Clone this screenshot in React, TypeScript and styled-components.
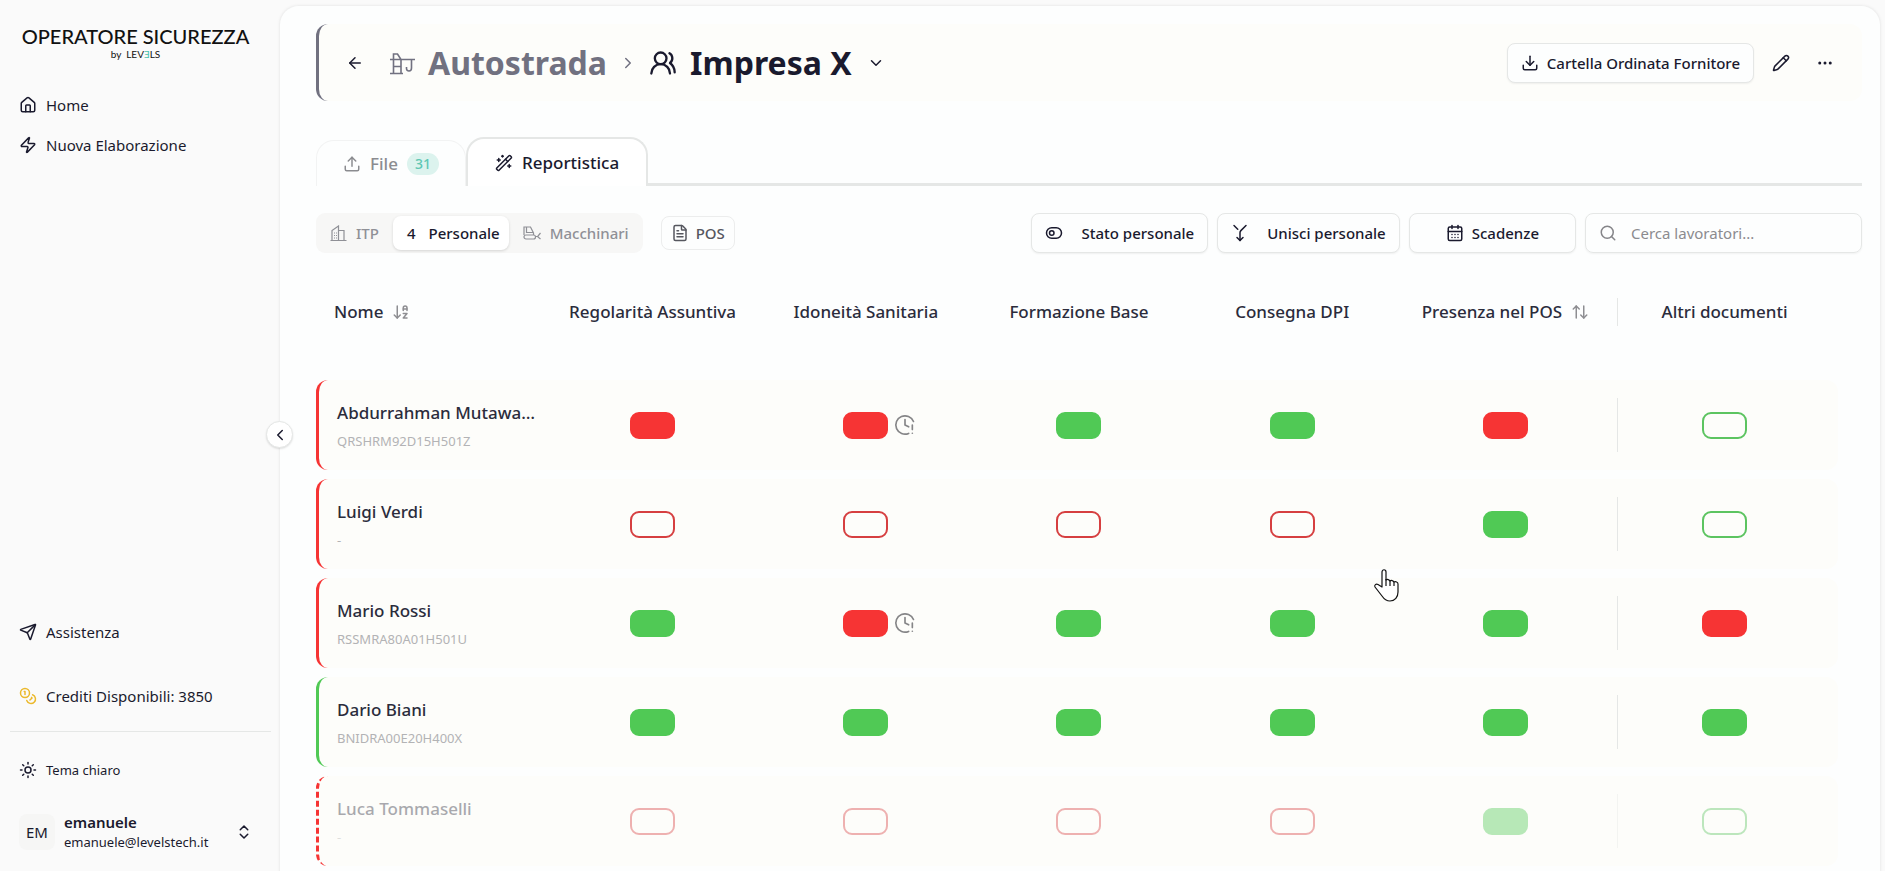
import React from "react";
import styled, { createGlobalStyle, css } from "styled-components";
import {
  ArrowDownAZ,
  ArrowLeft,
  ArrowUpDown,
  CalendarDays,
  ChevronDown,
  ChevronLeft,
  ChevronRight,
  ChevronsUpDown,
  ClockAlert,
  Coins,
  Download,
  Ellipsis,
  FileText,
  House,
  Merge,
  Pencil,
  Search,
  Send,
  Sun,
  ToggleLeft,
  Upload,
  UsersRound,
  WandSparkles,
  Zap,
} from "lucide-react";

const ink = "#1a1a2e";
const muted = "#717180";
const line = "#e5e7e6";
const red = "#f63434";
const green = "#50c955";

const GlobalStyle = createGlobalStyle`
  *, *::before, *::after { box-sizing: border-box; }
  body {
    margin: 0;
    background: #fafafa;
    color: ${ink};
    font-family: "Noto Sans", "Open Sans", sans-serif;
    font-size: 15px;
    line-height: 20px;
  }
  button, input { font: inherit; color: inherit; }
  button { cursor: pointer; }
  a { color: inherit; text-decoration: none; }
  svg { flex: none; }
`;

const Shell = styled.div`
  display: grid;
  grid-template-columns: 280px minmax(0, 1fr);
  height: 100vh;
  overflow: hidden;
`;

/* ---------- Sidebar ---------- */

const Sidebar = styled.aside`
  display: flex;
  flex-direction: column;
  padding: 24px 9px 19px 10px;
`;

const Brand = styled.div`
  display: flex;
  flex-direction: column;
  align-items: center;
  color: #111;
  font-family: Lato, sans-serif;
  padding-right: 10px;
`;

const BrandName = styled.span`
  font-size: 20px;
  line-height: 24px;
  font-weight: 500;
  white-space: nowrap;
`;

const BrandBy = styled.span`
  font-size: 10px;
  line-height: 12px;
  b { font-weight: 400; color: #4cc2ad; }
`;

const Nav = styled.nav`
  display: flex;
  flex-direction: column;
  margin-top: 25px;
`;

const navItem = css`
  display: flex;
  align-items: center;
  gap: 9px;
  height: 40px;
  padding: 0 9px;
  border: 0;
  background: none;
  text-align: left;
`;

const NavLink = styled.a`
  ${navItem}
`;

const SideFooter = styled.div`
  display: flex;
  flex-direction: column;
  margin-top: auto;
`;

const Credits = styled.div`
  ${navItem}
  margin: 24px 0 15px;
  svg { color: #ebb92c; }
`;

const ThemeButton = styled.button`
  ${navItem}
  margin: 0 0 18px;
  font-size: 13px;
`;

const Divider = styled.hr`
  width: 100%;
  margin: 0 0 18px;
  border: 0;
  border-top: 1px solid ${line};
`;

const UserButton = styled.button`
  display: flex;
  align-items: center;
  gap: 9px;
  padding: 4px 18px 4px 9px;
  border: 0;
  background: none;
  text-align: left;
`;

const Avatar = styled.span`
  display: grid;
  place-items: center;
  width: 36px;
  height: 36px;
  border-radius: 8px;
  background: #f6f6f5;
`;

const UserText = styled.span`
  display: flex;
  flex: 1;
  flex-direction: column;
  font-size: 13px;
  b { font-size: 15px; font-weight: 600; }
`;

/* ---------- Main panel ---------- */

const Main = styled.main`
  position: relative;
  min-width: 0;
  margin: 5px 4px 0 -1px;
  padding: 18px 18px 0 36px;
  border: 1px solid #f0f0f0;
  border-bottom: 0;
  border-radius: 20px 20px 0 0;
  background: #fdfefe;
  box-shadow: 0 0 3px rgba(0, 0, 0, 0.05);
`;

const CollapseButton = styled.button`
  position: absolute;
  top: 415px;
  left: -14px;
  display: grid;
  place-items: center;
  width: 27px;
  height: 27px;
  padding: 0;
  border: 1px solid ${line};
  border-radius: 50%;
  background: #fff;
  box-shadow: 0 1px 2px rgba(0, 0, 0, 0.12);
`;

const PageHeader = styled.header`
  display: flex;
  align-items: center;
  justify-content: space-between;
  height: 77px;
  padding: 0 25px 0 24px;
  border-left: 3px solid ${muted};
  border-radius: 12px;
  background: #fdfdfa;
`;

const Crumbs = styled.div`
  display: flex;
  align-items: center;
  gap: 12px;
`;

const Crumb = styled.a<{ $muted?: boolean }>`
  display: flex;
  align-items: center;
  gap: 13px;
  color: ${(p) => (p.$muted ? muted : ink)};
  font-size: 32px;
  line-height: 40px;
  font-weight: 700;
  white-space: nowrap;
`;

const CrumbTitle = styled.h1`
  margin: 0;
  font: inherit;
`;

const IconButton = styled.button`
  display: grid;
  place-items: center;
  width: 24px;
  height: 24px;
  padding: 0;
  border: 0;
  background: none;
`;

const BackButton = styled(IconButton)`
  margin-right: 11px;
`;

const HeaderActions = styled.div`
  display: flex;
  align-items: center;
  gap: 15px;
`;

const IconActions = styled.div`
  display: flex;
  gap: 20px;
`;

const OutlineButton = styled.button<{ $gap?: number; $wide?: boolean }>`
  display: flex;
  align-items: center;
  justify-content: center;
  gap: ${(p) => p.$gap ?? 8}px;
  height: 40px;
  padding: 0 ${(p) => (p.$wide ? 36 : 13)}px;
  border: 1px solid ${line};
  border-radius: 8px;
  background: #fdfefe;
  box-shadow: 0 1px 2px rgba(0, 0, 0, 0.06);
  font-weight: 500;
  white-space: nowrap;
`;

const Tabs = styled.div`
  display: flex;
  align-items: flex-end;
  margin-top: 36px;
`;

const Tab = styled.button<{ $active?: boolean }>`
  display: flex;
  align-items: center;
  gap: 9px;
  border-style: solid;
  border-bottom: 0;
  border-radius: 18px 18px 0 0;
  font-size: 17px;
  font-weight: 500;
  ${(p) =>
    p.$active
      ? css`
          height: 49px;
          padding: 0 27px;
          border-width: 2px;
          border-color: ${line};
          background: #fff;
        `
      : css`
          height: 46px;
          padding: 0 26px;
          border-width: 1px;
          border-color: #f2f3f3;
          background: none;
          color: #8b8c90;
        `}
`;

const TabRule = styled.div`
  flex: 1;
  height: 3px;
  background: ${line};
`;

const Count = styled.span`
  padding: 1px 8px;
  border-radius: 11px;
  background: #dcf3ee;
  color: #5fc7b3;
  font-size: 14px;
`;

const Toolbar = styled.div`
  display: flex;
  align-items: center;
  justify-content: space-between;
  margin-top: 27px;
`;

const ToolGroup = styled.div`
  display: flex;
  align-items: center;
  gap: 9px;
`;

const Segments = styled.div`
  display: flex;
  align-items: center;
  height: 40px;
  margin-right: 9px;
  border-radius: 9px;
  background: #f7f7f6;
`;

const Segment = styled.button<{ $active?: boolean }>`
  display: flex;
  align-items: center;
  gap: ${(p) => (p.$active ? 13 : 9)}px;
  height: 34px;
  padding: 0 ${(p) => (p.$active ? 9 : 14)}px 0 14px;
  border: 0;
  border-radius: 8px;
  background: ${(p) => (p.$active ? "#fff" : "none")};
  box-shadow: ${(p) => (p.$active ? "0 1px 3px rgba(0, 0, 0, 0.14)" : "none")};
  color: ${(p) => (p.$active ? ink : "#8f9096")};
  font-weight: 500;
`;

const PosButton = styled.button`
  display: flex;
  align-items: center;
  gap: 7px;
  height: 34px;
  padding: 0 9px;
  border: 1px solid #eceded;
  border-radius: 8px;
  background: none;
  color: #56575f;
  font-weight: 500;
`;

const SearchBox = styled.label`
  display: flex;
  align-items: center;
  gap: 14px;
  width: 277px;
  height: 40px;
  padding: 0 13px;
  border: 1px solid ${line};
  border-radius: 8px;
  color: #858589;
  box-shadow: 0 1px 2px rgba(0, 0, 0, 0.05);
`;

const SearchInput = styled.input`
  flex: 1;
  min-width: 0;
  padding: 0;
  border: 0;
  outline: 0;
  background: none;
  &::placeholder { color: #8b8b8f; opacity: 1; }
`;

/* ---------- Table ---------- */

const Table = styled.table`
  width: calc(100% - 24px);
  table-layout: fixed;
  border-spacing: 0 9px;
`;

const NameCol = styled.col`
  width: 230px;
`;

const LastCol = styled.col`
  width: 226px;
`;

const HeadCell = styled.th`
  height: 109px;
  padding: 0 0 9px;
  color: #2b2c3c;
  font-size: 17px;
  font-weight: 500;
  white-space: nowrap;
  &:first-child { padding-left: 18px; }
  &:last-child { padding-right: 7px; }
`;

const HeadLabel = styled.span<{ $start?: boolean }>`
  display: flex;
  align-items: center;
  justify-content: ${(p) => (p.$start ? "flex-start" : "center")};
  gap: 9px;
  svg { color: #8e8e92; }
`;

const Separated = styled.div<{ $height: number }>`
  display: grid;
  align-items: center;
  height: ${(p) => p.$height}px;
  margin-left: 5px;
  border-left: 1px solid ${line};
`;

const Row = styled.tr<{ $tone: string; $dim?: boolean }>`
  td { height: 90px; padding: 0; background: #fdfdfa; }
  td > * { opacity: ${(p) => (p.$dim ? 0.4 : 1)}; }
  td:first-child {
    padding-left: 18px;
    border-left: 3px ${(p) => (p.$dim ? "dashed" : "solid")} ${(p) => p.$tone};
    border-radius: 12px 0 0 12px;
  }
  td:last-child { padding-right: 7px; border-radius: 0 12px 12px 0; }
`;

const PersonName = styled.div`
  color: #2b2c3c;
  font-size: 17px;
  line-height: 28px;
  font-weight: 500;
  white-space: nowrap;
`;

const PersonCode = styled.div`
  padding-top: 4px;
  color: #b3b3b5;
  font-size: 13px;
  line-height: 20px;
`;

const StatusWrap = styled.div`
  display: grid;
  grid-template-columns: 1fr auto 1fr;
  align-items: center;
  gap: 6px;
  color: #858587;
`;

const Pill = styled.span<{ $tone: string; $filled: boolean }>`
  grid-column: 2;
  width: 45px;
  height: 27px;
  border: 2px solid ${(p) => (p.$filled ? p.$tone : p.$tone === red ? "#d63f40" : "#5cc460")};
  border-radius: 9px;
  background: ${(p) => (p.$filled ? p.$tone : "transparent")};
`;

const PointerIcon = styled.svg`
  position: absolute;
  top: 561px;
  left: 1092px;
`;

const CraneIcon = () => (
  <svg width="25" height="24" viewBox="0 0 25 24" fill="none" stroke="currentColor" strokeWidth="1.6">
    <path d="M0 8.500h25M0 22.500h13M3.500 22.500V3h4l3.500 5.500v14M3.500 15.500h7.500M21.500 8.500v8.500c0 4-5 4-5 .5V16" />
  </svg>
);

const BuildingIcon = () => (
  <svg width="17" height="17" viewBox="0 0 17 17" fill="none" stroke="currentColor" strokeWidth="1.2">
    <path d="M0.500 15.500h16M2 15.500V5.500l6.500-4.500v14.500M8.500 5.500H14v10" />
    <path d="M4 8h1M6 8h1M4 10.500h1M6 10.500h1M4 13h1M6 13h1" />
  </svg>
);

const BulldozerIcon = () => (
  <svg width="18" height="16" viewBox="0 0 18 16" fill="none" stroke="currentColor" strokeWidth="1.2">
    <path d="M1 10V2h6.500l3 6v2M3.500 2v5.500h6.500M17.500 8l-2.500 3v1l2.500 2M12.500 11.500H15" />
    <rect x="1" y="10" width="11.500" height="4" rx="2" />
  </svg>
);

type Mark = "R" | "r" | "G" | "g";

interface Person {
  name: string;
  code: string;
  tone: string;
  dim?: boolean;
  expiring?: boolean;
  marks: Mark[];
}

const columns = ["Regolarità Assuntiva", "Idoneità Sanitaria", "Formazione Base", "Consegna DPI"];

const people: Person[] = [
  { name: "Abdurrahman Mutawa…", code: "QRSHRM92D15H501Z", tone: red, expiring: true, marks: ["R", "R", "G", "G", "R", "g"] },
  { name: "Luigi Verdi", code: "-", tone: red, marks: ["r", "r", "r", "r", "G", "g"] },
  { name: "Mario Rossi", code: "RSSMRA80A01H501U", tone: red, expiring: true, marks: ["G", "R", "G", "G", "G", "R"] },
  { name: "Dario Biani", code: "BNIDRA00E20H400X", tone: green, marks: ["G", "G", "G", "G", "G", "G"] },
  { name: "Luca Tommaselli", code: "-", tone: red, dim: true, marks: ["r", "r", "r", "r", "G", "g"] },
];

const Status = ({ mark, expiring }: { mark: Mark; expiring?: boolean }) => (
  <StatusWrap>
    <Pill $tone={mark.toUpperCase() === "R" ? red : green} $filled={mark === mark.toUpperCase()} />
    {expiring && <ClockAlert size={22} strokeWidth={1.8} />}
  </StatusWrap>
);

export default function App() {
  return (
    <>
      <GlobalStyle />
      <Shell>
        <Sidebar>
          <Brand>
            <BrandName>OPERATORE SICUREZZA</BrandName>
            <BrandBy>
              by&nbsp; LEV<b>Ǝ</b>LS
            </BrandBy>
          </Brand>
          <Nav>
            <NavLink href="#home"><House size={18} />Home</NavLink>
            <NavLink href="#nuova"><Zap size={18} />Nuova Elaborazione</NavLink>
          </Nav>
          <SideFooter>
            <NavLink href="#assistenza"><Send size={18} />Assistenza</NavLink>
            <Credits><Coins size={18} />Crediti Disponibili: 3850</Credits>
            <Divider />
            <ThemeButton type="button"><Sun size={18} />Tema chiaro</ThemeButton>
            <UserButton type="button">
              <Avatar>EM</Avatar>
              <UserText>
                <b>emanuele</b>
                emanuele@levelstech.it
              </UserText>
              <ChevronsUpDown size={18} />
            </UserButton>
          </SideFooter>
        </Sidebar>

        <Main>
          <CollapseButton type="button" aria-label="Comprimi menu"><ChevronLeft size={18} /></CollapseButton>

          <PageHeader>
            <Crumbs>
              <BackButton type="button" aria-label="Indietro"><ArrowLeft size={18} /></BackButton>
              <Crumb href="#autostrada" $muted><CraneIcon />Autostrada</Crumb>
              <ChevronRight size={18} color={muted} />
              <Crumb href="#impresa">
                <UsersRound size={28} />
                <CrumbTitle>Impresa X</CrumbTitle>
              </Crumb>
              <IconButton type="button" aria-label="Cambia impresa"><ChevronDown size={18} /></IconButton>
            </Crumbs>
            <HeaderActions>
              <OutlineButton type="button"><Download size={18} />Cartella Ordinata Fornitore</OutlineButton>
              <IconActions>
                <IconButton type="button" aria-label="Modifica"><Pencil size={18} /></IconButton>
                <IconButton type="button" aria-label="Altro"><Ellipsis size={18} /></IconButton>
              </IconActions>
            </HeaderActions>
          </PageHeader>

          <Tabs>
            <Tab type="button"><Upload size={18} />File<Count>31</Count></Tab>
            <Tab type="button" $active><WandSparkles size={18} />Reportistica</Tab>
            <TabRule />
          </Tabs>

          <Toolbar>
            <ToolGroup>
              <Segments>
                <Segment type="button"><BuildingIcon />ITP</Segment>
                <Segment type="button" $active><span>4</span>Personale</Segment>
                <Segment type="button"><BulldozerIcon />Macchinari</Segment>
              </Segments>
              <PosButton type="button"><FileText size={18} />POS</PosButton>
            </ToolGroup>
            <ToolGroup>
              <OutlineButton type="button" $gap={18}><ToggleLeft size={18} />Stato personale</OutlineButton>
              <OutlineButton type="button" $gap={18}>
                <Merge size={18} transform="rotate(180)" />Unisci personale
              </OutlineButton>
              <OutlineButton type="button" $wide><CalendarDays size={18} />Scadenze</OutlineButton>
              <SearchBox>
                <Search size={18} />
                <SearchInput type="search" aria-label="Cerca lavoratori" placeholder="Cerca lavoratori..." />
              </SearchBox>
            </ToolGroup>
          </Toolbar>

          <Table>
            <colgroup>
              <NameCol />
              <col span={5} />
              <LastCol />
            </colgroup>
            <thead>
              <tr>
                <HeadCell scope="col"><HeadLabel $start>Nome<ArrowDownAZ size={18} /></HeadLabel></HeadCell>
                {columns.map((label) => (
                  <HeadCell scope="col" key={label}><HeadLabel>{label}</HeadLabel></HeadCell>
                ))}
                <HeadCell scope="col"><HeadLabel>Presenza nel POS<ArrowUpDown size={18} /></HeadLabel></HeadCell>
                <HeadCell scope="col">
                  <Separated $height={28}><HeadLabel>Altri documenti</HeadLabel></Separated>
                </HeadCell>
              </tr>
            </thead>
            <tbody>
              {people.map((p) => (
                <Row key={p.name} $tone={p.tone} $dim={p.dim}>
                  <td>
                    <PersonName>{p.name}</PersonName>
                    <PersonCode>{p.code}</PersonCode>
                  </td>
                  {p.marks.slice(0, 5).map((mark, i) => (
                    <td key={i}><Status mark={mark} expiring={p.expiring && i === 1} /></td>
                  ))}
                  <td>
                    <Separated $height={54}><Status mark={p.marks[5]} /></Separated>
                  </td>
                </Row>
              ))}
            </tbody>
          </Table>

          <PointerIcon width="28" height="36" viewBox="0 0 28 36" fill="#fff" stroke="#111" strokeWidth="1.200" strokeLinejoin="round">
            <path d="M10 20V5c0-3 4-3 4 0v8c1-1 3.500-.5 4 1 1-1 3.500-.5 4 1 1.500-.7 4 0 4 2v8c0 5-3 9-8 9-4 0-6-2-8-5l-7-9c-1-2 1-3.500 3-2.500l4 2.500z" />
            <path d="M14 12v7M18 14v5M22 15v4" />
          </PointerIcon>
        </Main>
      </Shell>
    </>
  );
}
